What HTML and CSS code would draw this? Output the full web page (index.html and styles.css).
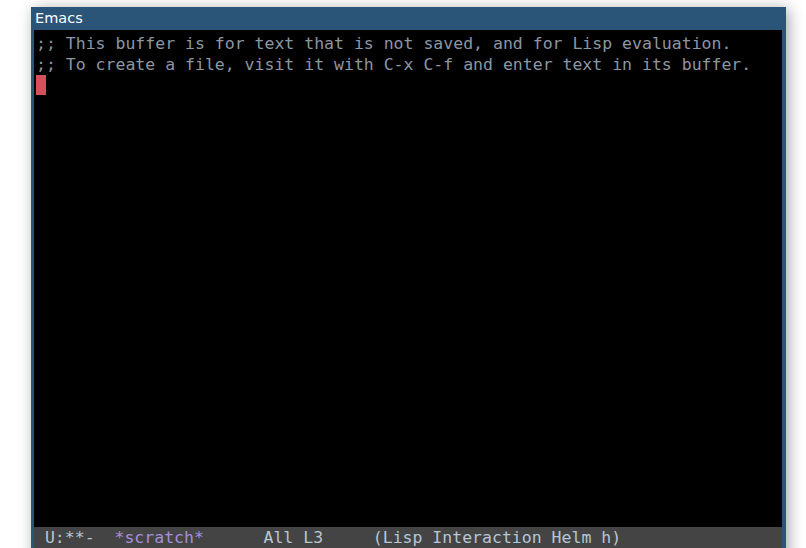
FILE: index.html
```html
<!DOCTYPE html>
<html>
<head>
<meta charset="utf-8">
<link rel="stylesheet" href="styles.css">
</head>
<body>
<div class="window">
  <div class="titlebar">Emacs</div>
  <div class="frame">
    <div class="buffer">
      <div class="line">;; This buffer is for text that is not saved, and for Lisp evaluation.</div>
      <div class="line">;; To create a file, visit it with C-x C-f and enter text in its buffer.</div>
      <div class="line"><span class="cursor"> </span></div>
    </div>
    <div class="modeline"><span> U:**-  </span><span class="bufname">*scratch*</span><span>      All L3     (Lisp Interaction Helm h)</span></div>
  </div>
</div>
</body>
</html>
```
FILE: styles.css
```css
html, body {
  margin: 0;
  padding: 0;
  background: #ffffff;
  overflow: hidden;
  height: 548px;
}
.window {
  margin: 7px 0 0 31px;
  width: 755px;
  height: 570px;
  background: #2b5578;
  display: flex;
  flex-direction: column;
  box-shadow: 3px 2px 14px rgba(0, 0, 0, 0.35);
}
.titlebar {
  height: 23px;
  line-height: 23px;
  padding-left: 4px;
  color: #ffffff;
  font-family: "DejaVu Sans", sans-serif;
  font-size: 14.5px;
  flex: none;
}
.frame {
  flex: 1;
  margin: 0 4px 0 3px;
  display: flex;
  flex-direction: column;
  background: #000000;
}
.buffer {
  flex: none;
  height: 497px;
  padding: 3px 0 0 2px;
  box-sizing: border-box;
  font-family: "DejaVu Sans Mono", monospace;
  font-size: 16.5px;
  line-height: 21px;
  color: #8b97a3;
}
.line {
  height: 21px;
  white-space: pre;
}
.cursor {
  display: inline-block;
  width: 10px;
  height: 20px;
  background: #d5505a;
  vertical-align: top;
}
.modeline {
  flex: none;
  height: 22px;
  background: #444444;
  color: #b6c6d4;
  font-family: "DejaVu Sans Mono", monospace;
  font-size: 16.5px;
  line-height: 22px;
  white-space: pre;
  padding-left: 1px;
}
.bufname {
  color: #a58fdc;
}
```
